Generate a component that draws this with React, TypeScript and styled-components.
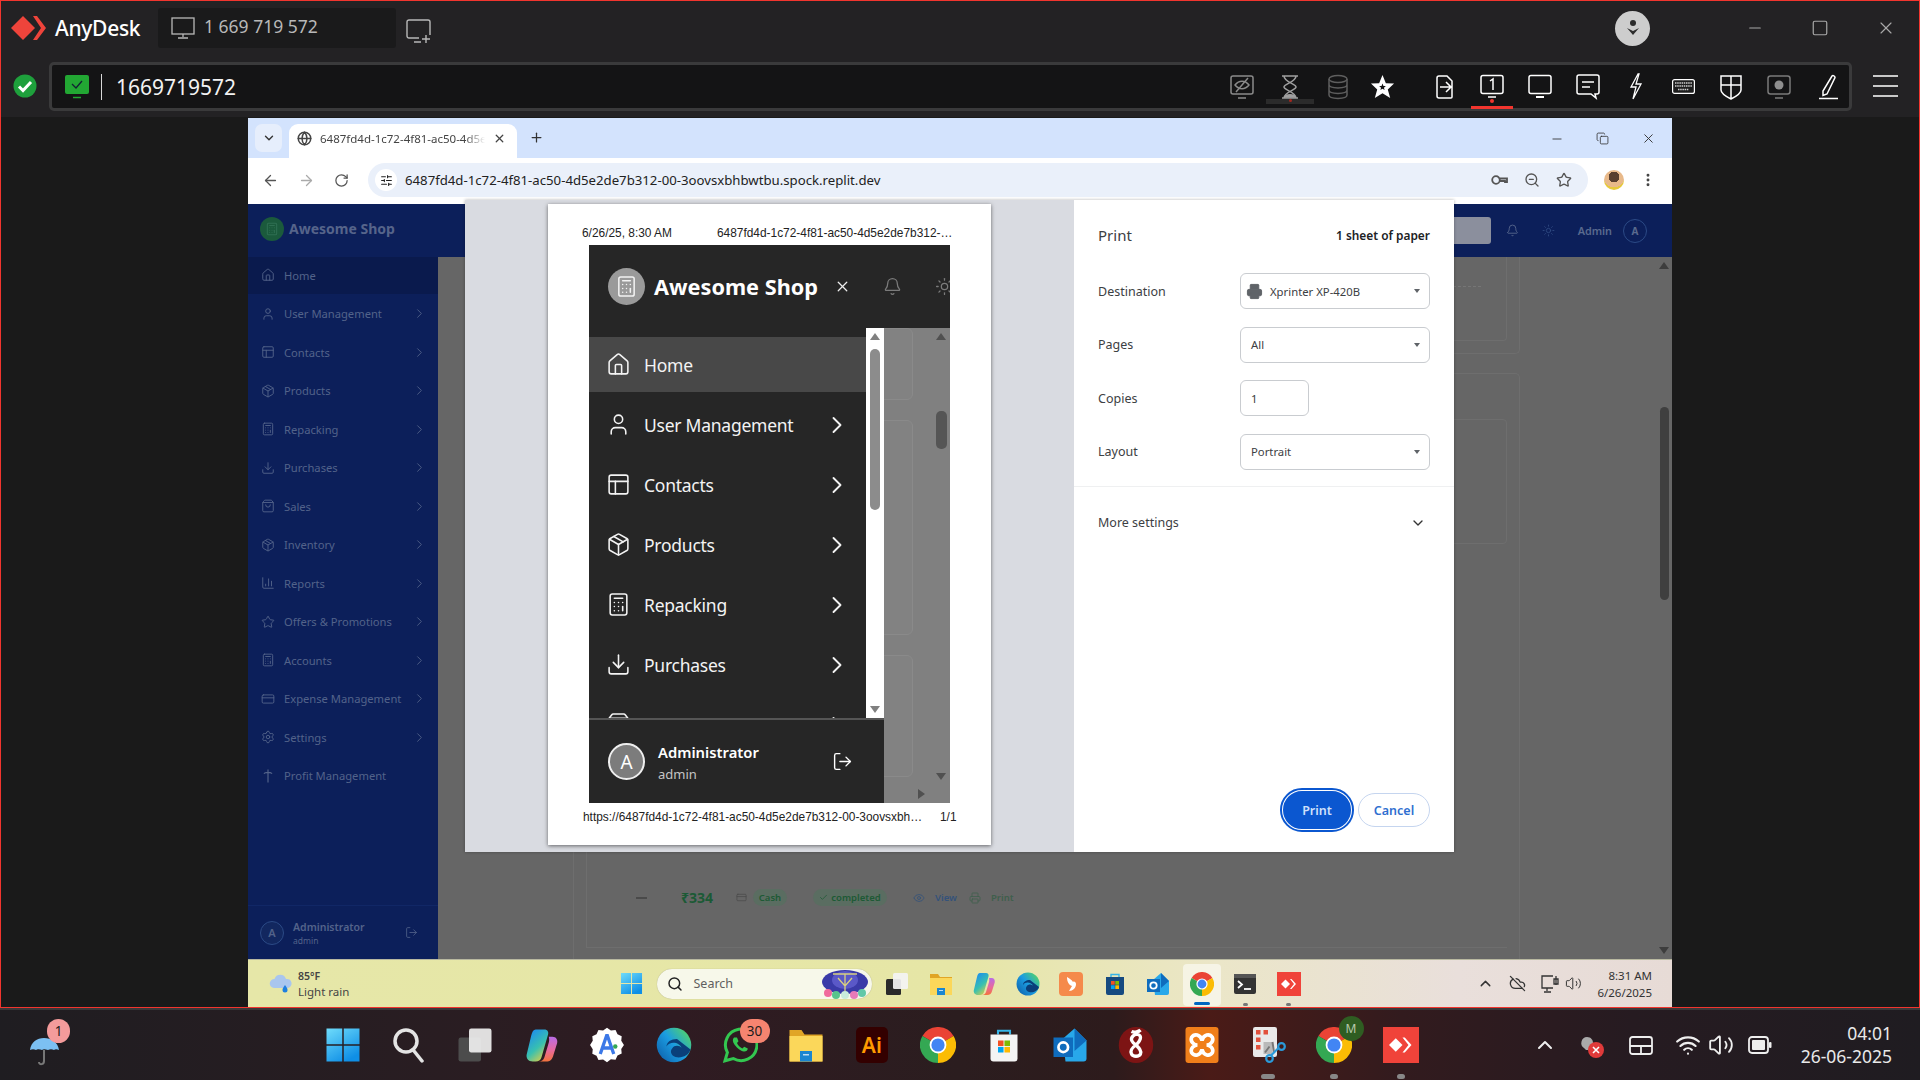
import React, { FC, ReactNode } from "react";
import styled, { createGlobalStyle } from "styled-components";
import {
  Home,
  User,
  PanelsTopLeft,
  Package,
  Calculator,
  Download,
  ChartColumn,
  Star,
  CreditCard,
  Settings,
  ChevronRight,
  ChevronDown,
  LogOut,
  Bell,
  Sun,
  X,
  Plus,
  Minus,
  ArrowLeft,
  ArrowRight,
  RotateCw,
  Globe,
  SlidersHorizontal,
  ZoomOut,
  MoreVertical,
  Printer,
  Search,
  ChevronUp,
  Copy,
  Square,
  Eye,
  Check,
  Volume2,
  CloudOff,
  Wifi,
  ShoppingBag,
} from "lucide-react";

const UI_FONT = `"Noto Sans", "Open Sans", sans-serif`;

const GlobalStyle = createGlobalStyle`
  html, body {
    margin: 0;
    padding: 0;
    background: #1a1a1a;
  }
  * {
    box-sizing: border-box;
  }
  svg {
    display: block;
    flex-shrink: 0;
  }
`;

const Screen = styled.div`
  width: 1920px;
  height: 1080px;
  display: flex;
  flex-direction: column;
  overflow: hidden;
  font-family: ${UI_FONT};
`;

/* ---------- AnyDesk frame ---------- */

const Frame = styled.div`
  height: 1008px;
  display: flex;
  flex-direction: column;
  border: 1px solid #f2352e;
  background: #1a1a1a;
`;

const TitleBar = styled.div`
  height: 59px;
  flex-shrink: 0;
  background: #232224;
  display: flex;
  align-items: center;
  padding: 0 0 5px 9px;
`;

const Brand = styled.div`
  width: 148px;
  display: flex;
  align-items: center;
  gap: 9px;
  color: #fff;
  font-size: 21px;
  font-weight: 500;
  letter-spacing: -0.3px;
`;

const SessionTab = styled.div`
  width: 238px;
  height: 40px;
  background: #1a1a1b;
  border-radius: 3px;
  display: flex;
  align-items: center;
  gap: 9px;
  padding-left: 13px;
  color: #b8b8b8;
  font-size: 17.5px;
`;

const SessionId = styled.span`
  margin-top: -4px;
`;

const NewSession = styled.div`
  margin-left: 10px;
  margin-top: 7px;
`;

const TitleRight = styled.div`
  margin-left: auto;
  display: flex;
  align-items: center;
`;

const AccountDot = styled.div`
  width: 35px;
  height: 35px;
  border-radius: 50%;
  background: #cdcdcd;
  display: flex;
  align-items: center;
  justify-content: center;
  margin-right: 96px;
`;

const WinButtons = styled.div`
  display: flex;
  align-items: center;
  gap: 47px;
  padding-right: 23px;
  color: #a8a8a8;
`;

const ToolbarRow = styled.div`
  height: 57px;
  flex-shrink: 0;
  background: #232224;
  display: flex;
  align-items: flex-start;
  padding-left: 12px;
`;

const Status = styled.div`
  width: 36px;
  height: 48px;
  margin-top: 2px;
  display: flex;
  align-items: center;
`;

const AddressBox = styled.div`
  width: 1803px;
  height: 49px;
  margin-top: 2px;
  background: #141415;
  border: 3px solid #3a3a3b;
  border-radius: 5px;
  display: flex;
  align-items: center;
  padding-left: 13px;
  position: relative;
`;

const AddressText = styled.div`
  margin-left: 12px;
  padding-left: 14px;
  border-left: 1px solid #d8d8d8;
  line-height: 26px;
  color: #f2f2f2;
  font-size: 21px;
`;

const ToolIcons = styled.div`
  margin-left: auto;
  display: flex;
  align-items: center;
  height: 100%;
  padding-right: 1px;
`;

const ToolSlot = styled.div<{ $after: number }>`
  width: 40px;
  height: 100%;
  margin-right: ${(p) => p.$after}px;
  display: flex;
  align-items: center;
  justify-content: center;
  position: relative;
`;

const ActiveMark = styled.div`
  position: absolute;
  left: 50%;
  bottom: -1px;
  width: 42px;
  height: 3px;
  margin-left: -21px;
  background: #f2352e;
  &::before {
    content: "";
    position: absolute;
    left: 19px;
    top: -7px;
    width: 4px;
    height: 4px;
    border-radius: 50%;
    background: #f2352e;
  }
`;

const BusyMark = styled.div`
  position: absolute;
  left: -4px;
  right: -4px;
  bottom: 4px;
  height: 5px;
  background: #2b2b2b;
  &::before {
    content: "";
    position: absolute;
    left: 23px;
    top: 0;
    width: 3px;
    height: 3px;
    border-radius: 50%;
    background: #a3271f;
  }
`;

const Burger = styled.div`
  width: 25px;
  margin-left: 21px;
  margin-top: 15px;
  display: flex;
  flex-direction: column;
  gap: 8px;
  & > span {
    height: 2px;
    background: #c9c9c9;
  }
`;

const RemoteView = styled.div`
  flex: 1;
  min-height: 0;
  padding: 1px 247px 0 247px;
  display: flex;
`;

/* ---------- remote browser ---------- */

const Browser = styled.div`
  width: 1424px;
  display: flex;
  flex-direction: column;
`;

const TabStrip = styled.div`
  height: 40px;
  flex-shrink: 0;
  background: #d3e3fd;
  display: flex;
  align-items: flex-end;
  padding-left: 7px;
  color: #333;
`;

const TabSearch = styled.div`
  width: 27px;
  height: 28px;
  margin-bottom: 6px;
  border-radius: 7px;
  background: #e6eefc;
  display: flex;
  align-items: center;
  justify-content: center;
`;

const ActiveTab = styled.div`
  width: 228px;
  height: 34px;
  margin-left: 7px;
  padding: 0 0 5px 8px;
  background: #fff;
  border-radius: 9px 9px 0 0;
  display: flex;
  align-items: center;
  gap: 8px;
  font-size: 11.5px;
  color: #444;
`;

const TabTitle = styled.span`
  width: 165px;
  white-space: nowrap;
  overflow: hidden;
  mask-image: linear-gradient(90deg, #000 88%, transparent 100%);
`;

const NewTab = styled.div`
  margin-left: 12px;
  margin-bottom: 13px;
`;

const ChromeButtons = styled.div`
  margin-left: auto;
  margin-bottom: 12px;
  display: flex;
  align-items: center;
  gap: 32px;
  padding-right: 16px;
`;

const UrlBar = styled.div`
  height: 46px;
  flex-shrink: 0;
  background: #fff;
  display: flex;
  align-items: center;
  padding: 0 0 2px 14px;
  color: #555;
`;

const NavButtons = styled.div`
  display: flex;
  align-items: center;
  gap: 19px;
  width: 106px;
`;

const UrlPill = styled.div`
  width: 1220px;
  height: 34px;
  border-radius: 17px;
  background: #eaf0fa;
  display: flex;
  align-items: center;
  padding: 0 16px 0 7px;
  font-size: 13.2px;
  color: #222;
`;

const SiteBadge = styled.div`
  width: 22px;
  height: 22px;
  border-radius: 50%;
  background: #fff;
  margin-right: 8px;
  display: flex;
  align-items: center;
  justify-content: center;
`;

const PillIcons = styled.div`
  margin-left: auto;
  display: flex;
  align-items: center;
  gap: 16px;
  color: #555;
`;

const Profile = styled.div`
  width: 20px;
  height: 20px;
  margin-left: 16px;
  border-radius: 50%;
  background: radial-gradient(circle at 50% 35%, #5a4030 0 32%, #e8b98a 33% 62%, #e6c93c 63%);
`;

const Dots = styled.div`
  margin-left: 16px;
  color: #444;
`;

const Page = styled.div`
  flex: 1;
  min-height: 0;
  display: flex;
  position: relative;
  background: #666;
`;

/* ---------- dimmed shop page behind the dialog ---------- */

const SideBar = styled.div`
  width: 190px;
  flex-shrink: 0;
  background: #0c1f5a;
  display: flex;
  flex-direction: column;
  color: #53638a;
`;

const SideBrand = styled.div`
  height: 53px;
  display: flex;
  align-items: center;
  gap: 5px;
  padding: 0 0 4px 12px;
  font-size: 14px;
  font-weight: 700;
  color: #56648a;
`;

const LogoDot = styled.div`
  width: 24px;
  height: 24px;
  border-radius: 50%;
  background: #1b5a3c;
  display: flex;
  align-items: center;
  justify-content: center;
  color: #2f6f52;
`;

const SideNav = styled.div`
  display: flex;
  flex-direction: column;
  gap: 2px;
`;

const SideItem = styled.div<{ $active?: boolean }>`
  height: 36.5px;
  display: flex;
  align-items: center;
  padding-left: 13px;
  gap: 9px;
  font-size: 11.2px;
  background: ${(p) => (p.$active ? "#0a1a4d" : "transparent")};
  & > span {
    flex: 1;
    white-space: nowrap;
  }
`;

const SideChevron = styled.div`
  width: 26px;
`;

const SideUser = styled.div`
  margin-top: auto;
  height: 54px;
  border-top: 1px solid #112766;
  display: flex;
  align-items: center;
  padding-left: 12px;
`;

const SideAvatar = styled.div`
  width: 24px;
  height: 24px;
  border-radius: 50%;
  border: 1px solid #2b4a86;
  background: #12275f;
  display: flex;
  align-items: center;
  justify-content: center;
  font-size: 11px;
  font-weight: 600;
`;

const SideUserText = styled.div`
  margin: 2px 0 0 9px;
  width: 112px;
  font-size: 10.5px;
  font-weight: 600;
  line-height: 14px;
  & > small {
    display: block;
    font-size: 8.5px;
    font-weight: 400;
  }
`;

const Main = styled.div`
  flex: 1;
  min-width: 0;
  display: flex;
  flex-direction: column;
`;

const AppHeader = styled.div`
  height: 53px;
  flex-shrink: 0;
  background: #0c1f5a;
  display: flex;
  align-items: center;
  justify-content: flex-end;
  padding-right: 25px;
  color: #5a6a8e;
  font-size: 10.8px;
  font-weight: 600;
`;

const HeaderSearch = styled.div`
  width: 120px;
  height: 27px;
  border-radius: 3px;
  background: #8b8f9d;
  margin-right: 15px;
`;

const HeaderGap = styled.div<{ $w: number }>`
  width: ${(p) => p.$w}px;
`;

const HeaderAvatar = styled.div`
  width: 24px;
  height: 24px;
  margin-left: 11px;
  border-radius: 50%;
  border: 1px solid #2b4a86;
  display: flex;
  align-items: center;
  justify-content: center;
  font-size: 10px;
  font-weight: 700;
`;

const Content = styled.div`
  flex: 1;
  min-height: 0;
  display: flex;
  position: relative;
  padding-left: 135px;
`;

const CardColumn = styled.div`
  width: 947px;
  display: flex;
  flex-direction: column;
  gap: 19px;
`;

const OuterTop = styled.div`
  height: 97px;
  flex-shrink: 0;
  border: 1px solid #6e6e6e;
  border-top: 0;
  border-radius: 0 0 5px 5px;
  padding: 0 12px;
`;

const InnerTop = styled.div`
  height: 84px;
  padding-top: 29px;
  border: 1px solid #6e6e6e;
  border-top: 0;
  border-radius: 0 0 4px 4px;
  &::before {
    content: "";
    display: block;
    width: 894px;
    border-top: 1px dashed #767676;
  }
`;

const OuterBottom = styled.div`
  flex: 1;
  min-height: 0;
  border: 1px solid #6e6e6e;
  border-bottom: 0;
  border-radius: 5px 5px 0 0;
  padding: 45px 12px 11px;
  display: flex;
  flex-direction: column;
`;

const InnerBottom = styled.div`
  height: 125px;
  flex-shrink: 0;
  border: 1px solid #6e6e6e;
  border-radius: 4px;
`;

const TxRow = styled.div`
  margin-top: auto;
  height: 100px;
  border: 1px solid #6e6e6e;
  border-top: 0;
  border-right: 0;
  display: flex;
  align-items: center;
  padding: 0 0 0 49px;
  font-size: 9.5px;
  font-weight: 600;
  color: #50615a;
  & > * {
    flex-shrink: 0;
  }
`;

const TxDash = styled.div`
  width: 11px;
  height: 2px;
  margin-right: 34px;
  background: #4a4a4a;
`;

const TxAmount = styled.div`
  width: 55px;
  font-size: 14px;
  font-weight: 700;
  color: #1b5a35;
`;

const TxPill = styled.div<{ $w: number; $after: number }>`
  width: ${(p) => p.$w}px;
  height: 17px;
  margin-right: ${(p) => p.$after}px;
  border-radius: 9px;
  background: #5a6d61;
  color: #1d5a35;
  display: flex;
  align-items: center;
  justify-content: center;
  gap: 3px;
`;

const TxLink = styled.div<{ $color: string }>`
  width: 56px;
  display: flex;
  align-items: center;
  gap: 10px;
  color: ${(p) => p.$color};
`;

const PageScroll = styled.div`
  position: absolute;
  right: 0;
  top: 0;
  bottom: 0;
  width: 14px;
  color: #3d3d3d;
`;

const ScrollUp = styled.div`
  position: absolute;
  top: 5px;
  left: 1px;
  border: 5px solid transparent;
  border-top: 0;
  border-bottom: 7px solid #3d3d3d;
`;

const ScrollDown = styled.div`
  position: absolute;
  bottom: 5px;
  left: 1px;
  border: 5px solid transparent;
  border-bottom: 0;
  border-top: 7px solid #3d3d3d;
`;

const ScrollThumb = styled.div`
  position: absolute;
  top: 150px;
  left: 2px;
  width: 9px;
  height: 193px;
  border-radius: 5px;
  background: #3f3f3f;
`;

/* ---------- print dialog ---------- */

const PrintDialog = styled.div`
  position: absolute;
  left: 217px;
  top: -4px;
  width: 989px;
  height: 652px;
  display: flex;
  background: #fff;
  box-shadow: 0 0 3px rgba(0, 0, 0, 0.3);
`;

const PreviewPane = styled.div`
  width: 609px;
  flex-shrink: 0;
  background: #d9dbe1;
  padding: 4px 0 0 83px;
`;

const Sheet = styled.div`
  width: 443px;
  height: 641px;
  background: #fff;
  box-shadow: 0 1px 4px rgba(0, 0, 0, 0.55);
  display: flex;
  flex-direction: column;
  font-family: "Liberation Sans", Arial, sans-serif;
  font-size: 11.9px;
  color: #222;
`;

const SheetHead = styled.div`
  height: 41px;
  flex-shrink: 0;
  padding: 22px 0 0 34px;
  display: flex;
  white-space: nowrap;
  & > span:first-child {
    width: 135px;
  }
`;

const SheetFoot = styled.div`
  padding: 7px 0 0 35px;
  display: flex;
  white-space: nowrap;
  & > span:first-child {
    width: 357px;
  }
`;

const PrintBox = styled.div`
  width: 361px;
  height: 558px;
  margin-left: 41px;
  flex-shrink: 0;
  display: flex;
  flex-direction: column;
  background: #808080;
  font-family: ${UI_FONT};
  color: #fff;
  overflow: hidden;
`;

const BoxHeader = styled.div`
  height: 83px;
  flex-shrink: 0;
  background: #262626;
  display: flex;
  align-items: center;
  padding: 0 0 0 19px;
`;

const BoxLogo = styled.div`
  width: 37px;
  height: 37px;
  border-radius: 50%;
  background: #9a9a9a;
  display: flex;
  align-items: center;
  justify-content: center;
`;

const BoxTitle = styled.div`
  margin-left: 9px;
  width: 180px;
  font-size: 21.7px;
  font-weight: 700;
  white-space: nowrap;
`;

const BoxHeaderIcon = styled.div<{ $w: number; $c: string }>`
  width: ${(p) => p.$w}px;
  color: ${(p) => p.$c};
  flex-shrink: 0;
`;

const BoxBody = styled.div`
  flex: 1;
  min-height: 0;
  display: flex;
`;

const BoxLeft = styled.div`
  width: 295px;
  flex-shrink: 0;
  display: flex;
  flex-direction: column;
`;

const NavWrap = styled.div`
  height: 390px;
  flex-shrink: 0;
  display: flex;
  overflow: hidden;
`;

const BoxNav = styled.div`
  width: 277px;
  flex-shrink: 0;
  background: #262626;
  padding-top: 9px;
  display: flex;
  flex-direction: column;
  gap: 5px;
`;

const BoxItem = styled.div<{ $active?: boolean }>`
  height: 55px;
  flex-shrink: 0;
  display: flex;
  align-items: center;
  padding-left: 17px;
  font-size: 17.5px;
  letter-spacing: -0.25px;
  background: ${(p) => (p.$active ? "#484848" : "transparent")};
  color: #f3f3f3;
  & > span {
    margin-left: 13px;
    width: 179px;
    white-space: nowrap;
  }
`;

const NavScroll = styled.div`
  width: 18px;
  flex-shrink: 0;
  background: #fff;
  position: relative;
`;

const NavThumb = styled.div`
  position: absolute;
  left: 4px;
  top: 21px;
  width: 10px;
  height: 161px;
  border-radius: 5px;
  background: #8c8c8c;
`;

const NavArrow = styled.div<{ $down?: boolean }>`
  position: absolute;
  left: 4px;
  ${(p) => (p.$down ? "bottom: 5px;" : "top: 5px;")}
  border: 5px solid transparent;
  ${(p) =>
    p.$down
      ? "border-bottom: 0; border-top: 7px solid #808080;"
      : "border-top: 0; border-bottom: 7px solid #808080;"}
`;

const BoxUser = styled.div`
  flex: 1;
  background: #262626;
  border-top: 2px solid #555;
  display: flex;
  align-items: center;
  padding-left: 19px;
`;

const BoxAvatar = styled.div`
  width: 37px;
  height: 37px;
  border-radius: 50%;
  border: 2px solid #eee;
  background: #7c7c7c;
  display: flex;
  align-items: center;
  justify-content: center;
  font-size: 19px;
`;

const BoxUserText = styled.div`
  margin: 3px 0 0 13px;
  width: 174px;
  font-size: 14.8px;
  font-weight: 600;
  line-height: 21px;
  & > small {
    display: block;
    font-size: 13px;
    font-weight: 400;
    line-height: 22px;
    color: #c4c4c4;
  }
`;

const BoxRight = styled.div`
  flex: 1;
  position: relative;
  padding-bottom: 18px;
  display: flex;
  flex-direction: column;
  gap: 20px;
  overflow: hidden;
`;

const GhostCard = styled.div<{ $h: number }>`
  width: 37px;
  height: ${(p) => p.$h}px;
  flex-shrink: 0;
  margin-left: -8px;
  background: #828282;
  border: 1px solid #8a8a8a;
  border-radius: 6px;
`;

const BoxScrollThumb = styled.div`
  position: absolute;
  left: 52px;
  top: 83px;
  width: 11px;
  height: 38px;
  border-radius: 5px;
  background: #555;
`;

const BoxArrow = styled.div<{ $down?: boolean }>`
  position: absolute;
  left: 52px;
  ${(p) => (p.$down ? "bottom: 23px;" : "top: 5px;")}
  border: 5px solid transparent;
  ${(p) =>
    p.$down
      ? "border-bottom: 0; border-top: 7px solid #505050;"
      : "border-top: 0; border-bottom: 7px solid #505050;"}
`;

const BoxArrowRight = styled.div`
  position: absolute;
  left: 34px;
  bottom: 4px;
  border: 5px solid transparent;
  border-right: 0;
  border-left: 7px solid #505050;
`;

const SettingsPane = styled.div`
  flex: 1;
  display: flex;
  flex-direction: column;
  padding-top: 24px;
  color: #3c4043;
  font-size: 12.5px;
`;

const SettingsHead = styled.div`
  height: 22px;
  padding: 0 24px;
  display: flex;
  align-items: center;
  justify-content: space-between;
  font-size: 15px;
  margin-bottom: 27px;
  & > b {
    font-size: 11.9px;
    font-weight: 600;
    color: #202124;
  }
`;

const SettingRow = styled.div`
  height: 36px;
  margin-bottom: 17.5px;
  padding: 0 24px;
  display: grid;
  grid-template-columns: 142px 1fr;
  align-items: center;
`;

const SelectBox = styled.div<{ $narrow?: boolean }>`
  width: ${(p) => (p.$narrow ? "69px" : "190px")};
  height: 36px;
  border: 1px solid #c9ccd0;
  border-radius: 6px;
  display: flex;
  align-items: center;
  padding-left: 10px;
  font-size: 11.3px;
  color: #3c4043;
  position: relative;
  gap: 7px;
`;

const PrinterBadge = styled.div`
  margin-left: -5px;
  color: #5f6368;
`;

const Caret = styled.div`
  position: absolute;
  right: 9px;
  top: 15px;
  border: 3.5px solid transparent;
  border-bottom: 0;
  border-top: 4px solid #5f6368;
`;

const SettingsRule = styled.div`
  height: 1px;
  background: #eff0f1;
  margin-top: -1px;
`;

const MoreRow = styled.div`
  height: 71px;
  padding: 0 28px 0 24px;
  display: flex;
  align-items: center;
  justify-content: space-between;
`;

const ButtonRow = styled.div`
  margin-top: auto;
  padding: 0 24px 21px 0;
  display: flex;
  justify-content: flex-end;
  align-items: center;
  gap: 5px;
`;

const PrintBtn = styled.div`
  width: 72px;
  height: 42px;
  border-radius: 21px;
  background: #0b57d0;
  border: 2px solid #fff;
  outline: 2px solid #0b57d0;
  outline-offset: -1px;
  color: #cfe0fb;
  font-size: 12.5px;
  font-weight: 600;
  display: flex;
  align-items: center;
  justify-content: center;
`;

const CancelBtn = styled.div`
  width: 72px;
  height: 34px;
  border-radius: 17px;
  border: 1px solid #c5d5ef;
  color: #2f6fd0;
  font-size: 12.5px;
  font-weight: 600;
  display: flex;
  align-items: center;
  justify-content: center;
`;

/* ---------- remote taskbar ---------- */

const RemoteTaskbar = styled.div`
  height: 48px;
  flex-shrink: 0;
  border-top: 1px solid #b8b8a0;
  background: linear-gradient(90deg, #e6e7a8 0%, #e6e6a6 50%, #ebe6c8 68%, #e9dfdb 85%, #e7dbd6 100%);
  display: flex;
  align-items: center;
`;

const Weather = styled.div`
  width: 362px;
  flex-shrink: 0;
  padding-left: 21px;
  display: flex;
  align-items: center;
  gap: 5px;
  font-size: 11.5px;
  line-height: 15px;
  color: #444;
  & > div > b {
    display: block;
    font-weight: 600;
    font-size: 10.5px;
  }
`;

const TaskSlot = styled.div<{ $active?: boolean }>`
  width: 43.5px;
  height: 46px;
  flex-shrink: 0;
  display: flex;
  align-items: center;
  justify-content: center;
  position: relative;
  &::before {
    content: "";
    display: ${(p) => (p.$active ? "block" : "none")};
    position: absolute;
    left: 3px;
    right: 3px;
    top: 3px;
    bottom: 1px;
    border-radius: 4px;
    background: rgba(255, 255, 255, 0.55);
  }
  & > * {
    position: relative;
  }
`;

const RunDot = styled.div<{ $w?: number; $c?: string }>`
  position: absolute;
  left: 50%;
  bottom: ${(p) => (p.$c ? "2px" : "1px")};
  width: ${(p) => p.$w ?? 5}px;
  height: 3px;
  margin-left: ${(p) => -(p.$w ?? 5) / 2}px;
  border-radius: 2px;
  background: ${(p) => p.$c ?? "#777"};
`;

const SearchBox = styled.div`
  width: 215px;
  height: 30px;
  margin: 0 4px 0 3px;
  flex-shrink: 0;
  border-radius: 15px;
  background: #f7f8ea;
  display: flex;
  align-items: center;
  padding-left: 10px;
  gap: 11px;
  font-size: 12.5px;
  color: #5f5f5f;
  box-shadow: 0 0 1px rgba(0, 0, 0, 0.3);
`;

const SearchArt = styled.div`
  margin-left: auto;
  margin-right: 3px;
`;

const RemoteTray = styled.div`
  margin-left: auto;
  display: flex;
  align-items: center;
  padding-right: 20px;
  color: #333;
`;

const TrayGap = styled.div<{ $w: number }>`
  width: ${(p) => p.$w}px;
`;

const RemoteClock = styled.div`
  margin-left: 15px;
  text-align: right;
  font-size: 11.5px;
  line-height: 17px;
  color: #333;
`;

/* ---------- local taskbar ---------- */

const LocalTaskbar = styled.div`
  flex: 1;
  min-height: 0;
  border-top: 2px solid #3a3839;
  background: linear-gradient(90deg, #1f1d21 0%, #2a1d22 25%, #2f1b22 35%, #2b1d1f 50%, #2d1b1c 58%, #4a1b17 63%, #321b1e 73%, #261b21 85%, #1f1c21 100%);
  display: flex;
  align-items: center;
  padding-left: 28px;
  position: relative;
`;

const Umbrella = styled.div`
  width: 282px;
  flex-shrink: 0;
  position: relative;
  padding-top: 12px;
`;

const NotifyBadge = styled.div<{ $bg: string; $left: number; $top: number; $w: number }>`
  position: absolute;
  left: ${(p) => p.$left}px;
  top: ${(p) => p.$top}px;
  width: ${(p) => p.$w}px;
  height: 24px;
  border-radius: 12px;
  background: ${(p) => p.$bg};
  color: #1c1c1c;
  font-size: 13.5px;
  display: flex;
  align-items: center;
  justify-content: center;
`;

const LocalSlot = styled.div`
  width: 66.1px;
  height: 70px;
  flex-shrink: 0;
  display: flex;
  align-items: center;
  justify-content: center;
  position: relative;
`;

const LocalDot = styled.div<{ $wide?: boolean }>`
  position: absolute;
  bottom: 1px;
  left: 50%;
  width: ${(p) => (p.$wide ? "14px" : "8px")};
  height: 5px;
  margin-left: ${(p) => (p.$wide ? "-7px" : "-4px")};
  border-radius: 3px;
  background: #888;
`;

const ChromeBadge = styled.div`
  position: absolute;
  right: 4px;
  top: 6px;
  width: 25px;
  height: 25px;
  border-radius: 50%;
  background: #2f5d22;
  color: #b7c9ad;
  font-size: 12px;
  display: flex;
  align-items: center;
  justify-content: center;
`;

const LocalTray = styled.div`
  margin-left: auto;
  display: flex;
  align-items: center;
  padding-right: 28px;
  color: #eee;
`;

const LocalClock = styled.div`
  margin-left: 29px;
  text-align: right;
  font-size: 17.5px;
  line-height: 23px;
  color: #e9e9e9;
`;

const AiBadge = styled.div`
  width: 32px;
  height: 36px;
  border-radius: 5px;
  background: #330000;
  color: #ff9a00;
  font-size: 21px;
  font-weight: 600;
  display: flex;
  align-items: center;
  justify-content: center;
`;

/* ---------- drawn logos and toolbar glyphs ---------- */

const AnyDeskMark: FC<{ size?: number; color?: string }> = ({ size = 36, color = "#ef443b" }) => (
  <svg width={size} height={(size * 26) / 36} viewBox="0 0 36 26">
    <path d="M1 13 13 1l12 12-12 12z" fill={color} />
    <path d="M23 1h4l9 12-9 12h-4l8-12z" fill={color} />
  </svg>
);

const ChromeLogo: FC<{ size: number }> = ({ size }) => (
  <svg width={size} height={size} viewBox="0 0 24 24">
    <path d="M12 12 1.6 6a12 12 0 0 1 20.8 0z" fill="#ea4335" />
    <path d="M12 12 22.4 6A12 12 0 0 1 12 24z" fill="#fbbc04" />
    <path d="M12 12v12A12 12 0 0 1 1.6 6z" fill="#34a853" />
    <circle cx="12" cy="12" r="5.6" fill="#fff" />
    <circle cx="12" cy="12" r="4.4" fill="#4285f4" />
  </svg>
);

const WindowsLogo: FC<{ size: number }> = ({ size }) => (
  <svg width={size} height={size} viewBox="0 0 24 24">
    <defs>
      <linearGradient id="winGrad" x1="0" y1="0" x2="0.6" y2="1">
        <stop offset="0" stopColor="#6fdcfb" />
        <stop offset="1" stopColor="#0f8fe6" />
      </linearGradient>
    </defs>
    <path d="M1 1h10.500v10.500H1zM12.500 1H23v10.500H12.500zM1 12.500h10.500V23H1zM12.500 12.500H23V23H12.500z" fill="url(#winGrad)" />
  </svg>
);

const EdgeLogo: FC<{ size: number }> = ({ size }) => (
  <svg width={size} height={size} viewBox="0 0 24 24">
    <defs>
      <linearGradient id="edgeGrad" x1="1" y1="0.2" x2="0" y2="1">
        <stop offset="0" stopColor="#52d36a" />
        <stop offset="0.45" stopColor="#1b9de2" />
        <stop offset="1" stopColor="#0c59a4" />
      </linearGradient>
    </defs>
    <circle cx="12" cy="12" r="11.500" fill="url(#edgeGrad)" />
    <path d="M23 15c-1 4-6 6-10 5-3-1-4-4-2-6 1-2 5-2 6 0-1-4-8-5-10-1 0-3 3-5 7-5" fill="#0a3f7a" />
  </svg>
);

const CopilotLogo: FC<{ size: number }> = ({ size }) => (
  <svg width={size} height={size} viewBox="0 0 24 24">
    <defs>
      <linearGradient id="copA" x1="0.2" y1="0" x2="0.8" y2="1">
        <stop offset="0" stopColor="#1c8cf0" />
        <stop offset="0.55" stopColor="#38c0b0" />
        <stop offset="1" stopColor="#e8d040" />
      </linearGradient>
      <linearGradient id="copB" x1="0.5" y1="0" x2="0.5" y2="1">
        <stop offset="0" stopColor="#b86be6" />
        <stop offset="0.55" stopColor="#e86a9c" />
        <stop offset="1" stopColor="#f4733c" />
      </linearGradient>
    </defs>
    <path d="M8 1h6c2 0 3 1.500 2.500 3.500L12 20c-.6 2-2 3-4 3H6c-3 0-5-2.500-4-5.500L5 5c.6-2.500 1.500-4 3-4z" fill="url(#copA)" />
    <path d="M17 6h2.500c2.500 0 3.800 2 3.200 4.500l-2.500 8C19.500 21.500 18 23 15 23h-5c2 0 3.300-1 4-3l3-10c.4-1.500.3-3 0-4z" fill="url(#copB)" />
  </svg>
);

const FolderLogo: FC<{ size: number }> = ({ size }) => (
  <svg width={size} height={size} viewBox="0 0 24 24">
    <path d="M1 2h8l2 3h12v18H1z" fill="#e0a526" />
    <path d="M1 6h22v17H1z" fill="#fbd75a" />
    <path d="M8 16h8v7H8z" fill="#1a86d0" />
    <path d="M10 18h4v1h-4z" fill="#fff" opacity="0.7" />
  </svg>
);

const StoreLogo: FC<{ size: number; body: string }> = ({ size, body }) => (
  <svg width={size} height={size} viewBox="0 0 24 24">
    <path d="M8 5V2.500h8V5" fill="none" stroke="#35b4e8" strokeWidth="1.400" />
    <path d="M3 5h18v16a2 2 0 0 1-2 2H5a2 2 0 0 1-2-2z" fill={body} />
    <path d="M8 9h3.700v3.700H8z" fill="#f25022" />
    <path d="M12.300 9H16v3.700h-3.700z" fill="#7fba00" />
    <path d="M8 13.300h3.700V17H8z" fill="#00a4ef" />
    <path d="M12.300 13.300H16V17h-3.700z" fill="#ffb900" />
  </svg>
);

const OutlookLogo: FC<{ size: number }> = ({ size }) => (
  <svg width={size} height={size} viewBox="0 0 24 24">
    <path d="M7 8 15 1l8 8v12a2 2 0 0 1-2 2H9z" fill="#28a8ea" />
    <path d="M15 1l8 8-8 7z" fill="#0f6cbd" />
    <path d="M1 7h13v13H1z" fill="#0f6cbd" />
    <circle cx="7.500" cy="13.500" r="3.200" fill="none" stroke="#fff" strokeWidth="1.800" />
  </svg>
);

const TerminalLogo: FC<{ size: number }> = ({ size }) => (
  <svg width={size} height={size} viewBox="0 0 24 24">
    <rect x="1" y="2" width="22" height="20" rx="2" fill="#333" />
    <rect x="1" y="2" width="22" height="4" fill="#555" />
    <path d="m5 9 4 3.500L5 16" fill="none" stroke="#fff" strokeWidth="1.800" />
    <path d="M11 17h7" stroke="#fff" strokeWidth="1.800" />
  </svg>
);

const SquareAnyDesk: FC<{ size: number }> = ({ size }) => (
  <svg width={size} height={size} viewBox="0 0 24 24">
    <rect width="24" height="24" fill="#f0433a" />
    <path d="M4 12l4.500-4.500L13 12l-4.500 4.500z" fill="#fff" />
    <path d="M13 7h1.500l4.500 5-4.500 5H13l4-5z" fill="#fff" />
  </svg>
);

const WhatsAppLogo: FC<{ size: number }> = ({ size }) => (
  <svg width={size} height={size} viewBox="0 0 24 24">
    <path d="M2 22.500 3.600 17A10.500 10.500 0 1 1 7.500 21z" fill="none" stroke="#33c750" strokeWidth="2" />
    <path d="M8 7c-1.200 1-1 3 .5 5s4 4 6 4.300c1.500.2 2.600-.8 2.700-2l-2.400-1.200-1.200 1.200c-1.500-.5-3-2-3.600-3.600l1-1.200L10 7z" fill="#33c750" />
  </svg>
);

const SparkLogo: FC<{ size: number }> = ({ size }) => (
  <svg width={size} height={size} viewBox="0 0 24 24">
    <path d="M12 .5l2.600 1.800 3.100-.3 1.300 2.800 2.800 1.300-.3 3.100 1.800 2.800-1.800 2.600.3 3.100-2.800 1.300-1.300 2.800-3.100-.3L12 23.500l-2.600-1.800-3.100.3L5 19.200l-2.800-1.300.3-3.100L.7 12l1.800-2.800-.3-3.100L5 4.800l1.300-2.800 3.100.3z" fill="#fff" />
    <path d="M12 5 7.500 18M12 5l4.500 13M9 14h6" fill="none" stroke="#3b78e7" strokeWidth="2.200" />
    <circle cx="17.500" cy="13" r="1.500" fill="#34a853" />
  </svg>
);

const RedEightLogo: FC<{ size: number }> = ({ size }) => (
  <svg width={size} height={size} viewBox="0 0 24 24">
    <ellipse cx="12" cy="12" rx="11.500" ry="12" fill="#7d1414" />
    <path d="M9 3c2 1 5 0 6-1M12 12c-3-2-4-4-2-6s5-1 5 1-1 3-3 5c-3 2-4 4-3 6s5 2 6 0-1-4-3-6" fill="none" stroke="#fff" strokeWidth="2.200" />
  </svg>
);

const XamppLogo: FC<{ size: number }> = ({ size }) => (
  <svg width={size} height={size} viewBox="0 0 24 24">
    <rect x="1" width="22" height="24" rx="2" fill="#f07f1a" />
    <path d="M5 7c2-3 6-2 7 2 1-4 5-5 7-2 1 3-2 5-4 5 2 0 5 2 4 5-2 3-6 2-7-2-1 4-5 5-7 2-1-3 2-5 4-5-2 0-5-2-4-5z" fill="none" stroke="#fff" strokeWidth="2.400" />
  </svg>
);

const SnipLogo: FC<{ size: number }> = ({ size }) => (
  <svg width={size} height={size} viewBox="0 0 24 24">
    <rect x="2" y="0" width="16" height="20" rx="1.500" fill="#e9e9e9" />
    <path d="M4 2h3v3H4zM9 2h3v3H9zM4 7h3v3H4zM4 12h3v3H4z" fill="#e2503c" />
    <path d="M9 10h6v8H9z" fill="#b9b9b9" />
    <path d="M13 13l-3 4M15 10l1 7" stroke="#777" strokeWidth="1.300" />
    <circle cx="21" cy="13" r="2.200" fill="none" stroke="#2a9ad9" strokeWidth="1.500" />
    <circle cx="13" cy="21" r="2.200" fill="none" stroke="#2a9ad9" strokeWidth="1.500" />
    <path d="M19 14l-5 5" stroke="#2a9ad9" strokeWidth="1.400" />
  </svg>
);

const TaskViewLogo: FC<{ size: number; back: string; front: string }> = ({ size, back, front }) => (
  <svg width={size} height={size} viewBox="0 0 24 24">
    <rect x="1" y="7" width="15" height="16" rx="1.500" fill={back} />
    <rect x="8" y="1" width="15" height="16" rx="1.500" fill={front} opacity="0.92" />
  </svg>
);

const UmbrellaIcon: FC = () => (
  <svg width="34" height="30" viewBox="0 0 34 30">
    <path d="M2 14C3 6 9 2 16 2s14 4 15 12c-2-1-4-1-5 0-2-1-4-1-6 0-3-1-5-1-6 0-2-1-5-1-6 0-2-1-4-1-6 0z" fill="#7cc0f2" />
    <path d="M16 14v11c0 4-5 4-5 1" fill="none" stroke="#777" strokeWidth="2" />
  </svg>
);

const CloudRain: FC = () => (
  <svg width="24" height="24" viewBox="0 0 24 24">
    <path d="M5 16a4.500 4.500 0 0 1 .5-9 6 6 0 0 1 11.500 0A4.500 4.500 0 0 1 19 16z" fill="#a9c6ee" />
    <path d="M16 13c1.500 2 2.500 3.500 2.500 5a2.500 2.500 0 0 1-5 0c0-1.500 1-3 2.500-5z" fill="#1d7fe0" />
  </svg>
);

const BingArt: FC = () => (
  <svg width="48" height="30" viewBox="0 0 48 30">
    <ellipse cx="24" cy="13" rx="23" ry="12" fill="#3a3aa8" />
    <ellipse cx="24" cy="11" rx="13" ry="9" fill="#5a58c8" />
    <path d="M12 5h24M24 5v17M17 9l7 8 7-8" stroke="#d8d080" strokeWidth="1.300" fill="none" />
    <circle cx="7" cy="24" r="4" fill="#f06a9c" />
    <circle cx="15" cy="26" r="4" fill="#58c48c" />
    <circle cx="24" cy="26" r="4" fill="#c9ecdc" />
    <circle cx="33" cy="26" r="4" fill="#e87ab8" />
    <circle cx="41" cy="24" r="4" fill="#62c8a8" />
  </svg>
);

const ProfitGlyph: FC = () => (
  <svg width="14" height="14" viewBox="0 0 24 24" fill="none" stroke="currentColor" strokeWidth="2">
    <path d="M12 1v22M5 8c2-3 11-3 14 0" />
  </svg>
);

const KeyGlyph: FC = () => (
  <svg width="17" height="14" viewBox="0 0 17 14" fill="none" stroke="currentColor" strokeWidth="1.800">
    <circle cx="5" cy="7" r="3.800" />
    <path d="M9 5.500h7v3.500h-2V8H9" />
  </svg>
);

const BatteryGlyph: FC = () => (
  <svg width="24" height="18" viewBox="0 0 24 18">
    <rect x="1" y="1" width="19" height="16" rx="3" fill="none" stroke="#eee" strokeWidth="1.800" />
    <rect x="4" y="4" width="13" height="10" rx="1" fill="#eee" />
    <rect x="21" y="6" width="2.500" height="6" rx="1" fill="#eee" />
  </svg>
);

const G: FC<{ size?: number; c?: string; children: ReactNode; sw?: number }> = ({ size = 26, c = "#fff", sw = 1.5, children }) => (
  <svg width={size} height={size} viewBox="0 0 26 26" fill="none" stroke={c} strokeWidth={sw}>
    {children}
  </svg>
);

const toolbarIcons: { after: number; node: ReactNode; active?: boolean; busy?: boolean }[] = [
  {
    after: 8,
    node: (
      <G c="#8a8a8a">
        <rect x="2" y="2" width="22" height="18" rx="2" />
        <path d="M9 24h8M6 11c4-5 10-5 14 0-4 5-10 5-14 0zM7 18 19 4" />
      </G>
    ),
  },
  {
    after: 8,
    busy: true,
    node: (
      <G c="#a0a0a0">
        <path d="M5 2h16M5 24h16M7 2c0 6 12 8 12 11s-12 5-12 11M19 2c0 6-12 8-12 11s12 5 12 11" />
        <path d="M8 23c1-3 9-3 10 0z" fill="#a0a0a0" />
      </G>
    ),
  },
  {
    after: 4,
    node: (
      <G c="#5e5e5e">
        <ellipse cx="13" cy="5" rx="9" ry="3.500" />
        <path d="M4 5v16c0 4.500 18 4.500 18 0V5M4 10.500c0 4.500 18 4.500 18 0M4 16c0 4.500 18 4.500 18 0" />
      </G>
    ),
  },
  {
    after: 23,
    node: (
      <svg width="25" height="25" viewBox="0 0 26 26">
        <path d="M13 1l3.500 8.500L25 10l-6.500 6L21 25l-8-5-8 5 2.500-9L1 10l8.500-.5z" fill="#fff" />
        <path d="M13 10l1 2.500 2.500.1-2 1.600.7 2.500-2.200-1.400-2.200 1.400.7-2.500-2-1.600 2.500-.1z" fill="#141415" />
      </svg>
    ),
  },
  {
    after: 7,
    node: (
      <G>
        <path d="M5 4a2 2 0 0 1 2-2h8l5 5v16a1 1 0 0 1-1 1H7a2 2 0 0 1-2-2zM8 13h10M14 8l5 5-5 5" />
      </G>
    ),
  },
  {
    after: 8,
    active: true,
    node: (
      <G>
        <rect x="2" y="1.500" width="22" height="18" rx="2" />
        <path d="M9 23h8M11 7l3-2v11" />
      </G>
    ),
  },
  {
    after: 8,
    node: (
      <G>
        <rect x="2" y="1.500" width="22" height="18" rx="2" />
        <path d="M9 23h8" strokeWidth="2" />
      </G>
    ),
  },
  {
    after: 8,
    node: (
      <G>
        <path d="M2 3a2 2 0 0 1 2-2h18a2 2 0 0 1 2 2v15a2 2 0 0 1-2 2h-2l1 4-5-4H4a2 2 0 0 1-2-2zM7 8h12M7 13h8" />
      </G>
    ),
  },
  {
    after: 7,
    node: (
      <svg width="14" height="27" viewBox="0 0 14 27">
        <path d="M9 1 2 14h5L4 26l8-15H7l3-10z" fill="none" stroke="#fff" strokeWidth="1.300" />
      </svg>
    ),
  },
  {
    after: 8,
    node: (
      <svg width="23" height="15" viewBox="0 0 23 15">
        <rect x=".6" y=".6" width="21.800" height="13.800" rx="2" fill="#1d1d1d" stroke="#fff" strokeWidth="1.200" />
        <path d="M3 4h17M3 7h17M6 10.500h11" stroke="#cfcfcf" strokeWidth="1.500" strokeDasharray="1.500 .7" />
      </svg>
    ),
  },
  {
    after: 8,
    node: (
      <G>
        <path d="M3 2h20v14c0 4-6 7-10 9-4-2-10-5-10-9zM13 2v23M3 11h20" />
      </G>
    ),
  },
  {
    after: 9,
    node: (
      <G c="#7a7a7a">
        <rect x="2" y="2" width="22" height="18" rx="2.500" />
        <path d="M9 24h8" />
        <circle cx="13" cy="11" r="4.500" fill="#8f8f8f" stroke="none" />
      </G>
    ),
  },
  {
    after: 0,
    node: (
      <G>
        <path d="M17 2c1-1 3 0 3 1.500L12 20l-4 1.500L8 17zM4 24.500h19" />
      </G>
    ),
  },
];

type NavDef = { label: string; icon: ReactNode; noChevron?: boolean };

const iconProps = { size: 14, strokeWidth: 1.6 };

const sideNav: NavDef[] = [
  { label: "Home", icon: <Home {...iconProps} />, noChevron: true },
  { label: "User Management", icon: <User {...iconProps} /> },
  { label: "Contacts", icon: <PanelsTopLeft {...iconProps} /> },
  { label: "Products", icon: <Package {...iconProps} /> },
  { label: "Repacking", icon: <Calculator {...iconProps} /> },
  { label: "Purchases", icon: <Download {...iconProps} /> },
  { label: "Sales", icon: <ShoppingBag {...iconProps} /> },
  { label: "Inventory", icon: <Package {...iconProps} /> },
  { label: "Reports", icon: <ChartColumn {...iconProps} /> },
  { label: "Offers & Promotions", icon: <Star {...iconProps} /> },
  { label: "Accounts", icon: <Calculator {...iconProps} /> },
  { label: "Expense Management", icon: <CreditCard {...iconProps} /> },
  { label: "Settings", icon: <Settings {...iconProps} /> },
  { label: "Profit Management", icon: <ProfitGlyph />, noChevron: true },
];

const bigIcon = { size: 25, strokeWidth: 1.5 };

const previewNav: NavDef[] = [
  { label: "Home", icon: <Home {...bigIcon} />, noChevron: true },
  { label: "User Management", icon: <User {...bigIcon} /> },
  { label: "Contacts", icon: <PanelsTopLeft {...bigIcon} /> },
  { label: "Products", icon: <Package {...bigIcon} /> },
  { label: "Repacking", icon: <Calculator {...bigIcon} /> },
  { label: "Purchases", icon: <Download {...bigIcon} /> },
  { label: "Sales", icon: <ShoppingBag {...bigIcon} /> },
];

const App: FC = () => {
  return (
    <Screen>
      <GlobalStyle />
      <Frame>
        <TitleBar>
          <Brand>
            <AnyDeskMark />
            AnyDesk
          </Brand>
          <SessionTab>
            <svg width="24" height="24" viewBox="0 0 24 24" fill="none" stroke="#b8b8b8" strokeWidth="1.300">
              <rect x="1" y="2" width="22" height="16" />
              <path d="M12 18v3M7 22h10" />
            </svg>
            <SessionId>1 669 719 572</SessionId>
          </SessionTab>
          <NewSession>
            <svg width="25" height="25" viewBox="0 0 25 25" fill="none" stroke="#b8b8b8" strokeWidth="1.400">
              <path d="M13 19H3a2 2 0 0 1-2-2V3a2 2 0 0 1 2-2h19a2 2 0 0 1 2 2v13" />
              <path d="M8 23h7M20 16v8M16 20h8" />
            </svg>
          </NewSession>
          <TitleRight>
            <AccountDot>
              <svg width="14" height="18" viewBox="0 0 14 18">
                <circle cx="7" cy="4" r="3" fill="#2c2c2c" />
                <path d="M1 9l6 7 6-7-6 3z" fill="#2c2c2c" />
              </svg>
            </AccountDot>
            <WinButtons>
              <Minus size={18} strokeWidth={1.6} />
              <Square size={18} strokeWidth={1.6} />
              <X size={20} strokeWidth={1.4} />
            </WinButtons>
          </TitleRight>
        </TitleBar>
        <ToolbarRow>
          <Status>
            <svg width="24" height="24" viewBox="0 0 24 24">
              <circle cx="12" cy="12" r="11.500" fill="#1ea03c" />
              <path d="m6 12.500 4 4 8-8.500" fill="none" stroke="#fff" strokeWidth="3" />
            </svg>
          </Status>
          <AddressBox>
            <svg width="24" height="24" viewBox="0 0 24 24">
              <rect width="24" height="19" rx="2" fill="#22a733" />
              <path d="m7 9 4 4 6-7" fill="none" stroke="#123" strokeWidth="1.300" />
              <path d="M8 22.500h8" stroke="#22a733" strokeWidth="1.500" />
            </svg>
            <AddressText>1669719572</AddressText>
            <ToolIcons>
              {toolbarIcons.map((tool, i) => (
                <ToolSlot key={i} $after={tool.after}>
                  {tool.node}
                  {tool.active && <ActiveMark />}
                  {tool.busy && <BusyMark />}
                </ToolSlot>
              ))}
            </ToolIcons>
          </AddressBox>
          <Burger>
            <span />
            <span />
            <span />
          </Burger>
        </ToolbarRow>
        <RemoteView>
          <Browser>
            <TabStrip>
              <TabSearch>
                <ChevronDown size={14} strokeWidth={2.4} />
              </TabSearch>
              <ActiveTab>
                <Globe size={15} strokeWidth={2.4} />
                <TabTitle>6487fd4d-1c72-4f81-ac50-4d5e</TabTitle>
                <X size={13} strokeWidth={2.4} />
              </ActiveTab>
              <NewTab>
                <Plus size={15} strokeWidth={2} />
              </NewTab>
              <ChromeButtons>
                <Minus size={14} strokeWidth={1.5} />
                <Copy size={13} strokeWidth={1.5} />
                <X size={15} strokeWidth={1.5} />
              </ChromeButtons>
            </TabStrip>
            <UrlBar>
              <NavButtons>
                <ArrowLeft size={17} strokeWidth={1.8} />
                <ArrowRight size={17} strokeWidth={1.8} color="#aaa" />
                <RotateCw size={15} strokeWidth={2} />
              </NavButtons>
              <UrlPill>
                <SiteBadge>
                  <SlidersHorizontal size={13} strokeWidth={2} />
                </SiteBadge>
                6487fd4d-1c72-4f81-ac50-4d5e2de7b312-00-3oovsxbhbwtbu.spock.replit.dev
                <PillIcons>
                  <KeyGlyph />
                  <ZoomOut size={16} strokeWidth={2} />
                  <Star size={16} strokeWidth={2} />
                </PillIcons>
              </UrlPill>
              <Profile />
              <Dots>
                <MoreVertical size={16} strokeWidth={2.4} />
              </Dots>
            </UrlBar>
            <Page>
              <SideBar>
                <SideBrand>
                  <LogoDot>
                    <Calculator size={14} strokeWidth={1.8} />
                  </LogoDot>
                  Awesome Shop
                </SideBrand>
                <SideNav>
                  {sideNav.map((item, i) => (
                    <SideItem key={item.label} $active={i === 0}>
                      {item.icon}
                      <span>{item.label}</span>
                      {!item.noChevron && (
                        <SideChevron>
                          <ChevronRight size={15} strokeWidth={1.4} />
                        </SideChevron>
                      )}
                    </SideItem>
                  ))}
                </SideNav>
                <SideUser>
                  <SideAvatar>A</SideAvatar>
                  <SideUserText>
                    Administrator
                    <small>admin</small>
                  </SideUserText>
                  <LogOut size={13} strokeWidth={1.5} />
                </SideUser>
              </SideBar>
              <Main>
                <AppHeader>
                  <HeaderSearch />
                  <Bell size={13} strokeWidth={1.6} />
                  <HeaderGap $w={23} />
                  <Sun size={13} strokeWidth={1.6} color="#2f4a83" />
                  <HeaderGap $w={23} />
                  Admin
                  <HeaderAvatar>A</HeaderAvatar>
                </AppHeader>
                <Content>
                  <CardColumn>
                    <OuterTop>
                      <InnerTop />
                    </OuterTop>
                    <OuterBottom>
                      <InnerBottom />
                      <TxRow>
                        <TxDash />
                        <TxAmount>₹334</TxAmount>
                        <CreditCard size={11} strokeWidth={1.6} color="#4a4a4a" />
                        <HeaderGap $w={6} />
                        <TxPill $w={34} $after={26}>
                          Cash
                        </TxPill>
                        <TxPill $w={74} $after={26}>
                          <Check size={9} strokeWidth={2} />
                          completed
                        </TxPill>
                        <TxLink $color="#34527a">
                          <Eye size={12} strokeWidth={1.6} />
                          View
                        </TxLink>
                        <TxLink $color="#3f5f4c">
                          <Printer size={12} strokeWidth={1.6} />
                          Print
                        </TxLink>
                      </TxRow>
                    </OuterBottom>
                  </CardColumn>
                  <PageScroll>
                    <ScrollUp />
                    <ScrollThumb />
                    <ScrollDown />
                  </PageScroll>
                </Content>
              </Main>

              <PrintDialog>
                <PreviewPane>
                  <Sheet>
                    <SheetHead>
                      <span>6/26/25, 8:30 AM</span>
                      <span>6487fd4d-1c72-4f81-ac50-4d5e2de7b312-…</span>
                    </SheetHead>
                    <PrintBox>
                      <BoxHeader>
                        <BoxLogo>
                          <Calculator size={23} strokeWidth={1.6} color="#f2f2f2" />
                        </BoxLogo>
                        <BoxTitle>Awesome Shop</BoxTitle>
                        <BoxHeaderIcon $w={49} $c="#eee">
                          <X size={17} strokeWidth={1.8} />
                        </BoxHeaderIcon>
                        <BoxHeaderIcon $w={52} $c="#7b7b7b">
                          <Bell size={19} strokeWidth={1.6} />
                        </BoxHeaderIcon>
                        <BoxHeaderIcon $w={14} $c="#7b7b7b">
                          <Sun size={19} strokeWidth={1.6} />
                        </BoxHeaderIcon>
                      </BoxHeader>
                      <BoxBody>
                        <BoxLeft>
                          <NavWrap>
                            <BoxNav>
                              {previewNav.map((item, i) => (
                                <BoxItem key={item.label} $active={i === 0}>
                                  {item.icon}
                                  <span>{item.label}</span>
                                  {!item.noChevron && <ChevronRight size={28} strokeWidth={1.6} />}
                                </BoxItem>
                              ))}
                            </BoxNav>
                            <NavScroll>
                              <NavArrow />
                              <NavThumb />
                              <NavArrow $down />
                            </NavScroll>
                          </NavWrap>
                          <BoxUser>
                            <BoxAvatar>A</BoxAvatar>
                            <BoxUserText>
                              Administrator
                              <small>admin</small>
                            </BoxUserText>
                            <LogOut size={21} strokeWidth={1.6} />
                          </BoxUser>
                        </BoxLeft>
                        <BoxRight>
                          <GhostCard $h={72} />
                          <GhostCard $h={215} />
                          <GhostCard $h={122} />
                          <BoxArrow />
                          <BoxScrollThumb />
                          <BoxArrow $down />
                          <BoxArrowRight />
                        </BoxRight>
                      </BoxBody>
                    </PrintBox>
                    <SheetFoot>
                      <span>https://6487fd4d-1c72-4f81-ac50-4d5e2de7b312-00-3oovsxbh…</span>
                      <span>1/1</span>
                    </SheetFoot>
                  </Sheet>
                </PreviewPane>
                <SettingsPane>
                  <SettingsHead>
                    Print
                    <b>1 sheet of paper</b>
                  </SettingsHead>
                  <SettingRow>
                    Destination
                    <SelectBox>
                      <PrinterBadge>
                        <Printer size={17} fill="#5f6368" strokeWidth={1.4} />
                      </PrinterBadge>
                      Xprinter XP-420B
                      <Caret />
                    </SelectBox>
                  </SettingRow>
                  <SettingRow>
                    Pages
                    <SelectBox>
                      All
                      <Caret />
                    </SelectBox>
                  </SettingRow>
                  <SettingRow>
                    Copies
                    <SelectBox $narrow>1</SelectBox>
                  </SettingRow>
                  <SettingRow>
                    Layout
                    <SelectBox>
                      Portrait
                      <Caret />
                    </SelectBox>
                  </SettingRow>
                  <SettingsRule />
                  <MoreRow>
                    More settings
                    <ChevronDown size={16} strokeWidth={2} color="#333" />
                  </MoreRow>
                  <ButtonRow>
                    <PrintBtn>Print</PrintBtn>
                    <CancelBtn>Cancel</CancelBtn>
                  </ButtonRow>
                </SettingsPane>
              </PrintDialog>
            </Page>
            <RemoteTaskbar>
              <Weather>
                <CloudRain />
                <div>
                  <b>85°F</b>
                  Light rain
                </div>
              </Weather>
              <TaskSlot>
                <WindowsLogo size={23} />
              </TaskSlot>
              <SearchBox>
                <Search size={16} strokeWidth={2.2} color="#222" />
                Search
                <SearchArt>
                  <BingArt />
                </SearchArt>
              </SearchBox>
              <TaskSlot>
                <TaskViewLogo size={24} back="#2a2a2a" front="#f4f4f4" />
              </TaskSlot>
              <TaskSlot>
                <FolderLogo size={24} />
              </TaskSlot>
              <TaskSlot>
                <CopilotLogo size={24} />
              </TaskSlot>
              <TaskSlot>
                <EdgeLogo size={24} />
              </TaskSlot>
              <TaskSlot>
                <svg width="24" height="24" viewBox="0 0 24 24">
                  <rect width="24" height="24" rx="4" fill="#f58a4b" />
                  <path d="M8 5c0 5 2 8 5 9l-3 5c4 0 7-3 7-7 0-2-2-3-3-2-1-2-4-4-6-5z" fill="#fff" />
                </svg>
              </TaskSlot>
              <TaskSlot>
                <StoreLogo size={24} body="#164a80" />
              </TaskSlot>
              <TaskSlot>
                <OutlookLogo size={24} />
              </TaskSlot>
              <TaskSlot $active>
                <ChromeLogo size={24} />
                <RunDot $w={16} $c="#0067c0" />
              </TaskSlot>
              <TaskSlot>
                <TerminalLogo size={24} />
                <RunDot />
              </TaskSlot>
              <TaskSlot>
                <SquareAnyDesk size={24} />
                <RunDot />
              </TaskSlot>
              <RemoteTray>
                <ChevronUp size={17} strokeWidth={2} />
                <TrayGap $w={15} />
                <CloudOff size={17} strokeWidth={1.8} />
                <TrayGap $w={15} />
                <svg width="18" height="20" viewBox="0 0 18 20" fill="none" stroke="#333" strokeWidth="1.300">
                  <path d="M12 14H1V2h11M6 14v3M3 18h7M15 2v9M13 5h4v5h-4z" />
                </svg>
                <TrayGap $w={6} />
                <Volume2 size={17} strokeWidth={1.4} />
                <RemoteClock>
                  8:31 AM
                  <br />
                  6/26/2025
                </RemoteClock>
              </RemoteTray>
            </RemoteTaskbar>
          </Browser>
        </RemoteView>
      </Frame>
      <LocalTaskbar>
        <Umbrella>
          <UmbrellaIcon />
          <NotifyBadge $bg="#f49b9b" $left={19} $top={-5} $w={23}>
            1
          </NotifyBadge>
        </Umbrella>
        <LocalSlot>
          <WindowsLogo size={36} />
        </LocalSlot>
        <LocalSlot>
          <svg width="36" height="36" viewBox="0 0 36 36" fill="none" stroke="#e4e4e4" strokeWidth="3.500">
            <circle cx="15" cy="14" r="11" />
            <path d="m23 24 8 10" strokeLinecap="round" />
          </svg>
        </LocalSlot>
        <LocalSlot>
          <TaskViewLogo size={36} back="#4c4c4c" front="#efefef" />
        </LocalSlot>
        <LocalSlot>
          <CopilotLogo size={35} />
        </LocalSlot>
        <LocalSlot>
          <SparkLogo size={36} />
        </LocalSlot>
        <LocalSlot>
          <EdgeLogo size={36} />
        </LocalSlot>
        <LocalSlot>
          <WhatsAppLogo size={36} />
          <NotifyBadge $bg="#f58470" $left={33} $top={9} $w={30}>
            30
          </NotifyBadge>
        </LocalSlot>
        <LocalSlot>
          <FolderLogo size={36} />
        </LocalSlot>
        <LocalSlot>
          <AiBadge>Ai</AiBadge>
        </LocalSlot>
        <LocalSlot>
          <ChromeLogo size={36} />
        </LocalSlot>
        <LocalSlot>
          <StoreLogo size={36} body="#f4f4f4" />
        </LocalSlot>
        <LocalSlot>
          <OutlookLogo size={36} />
        </LocalSlot>
        <LocalSlot>
          <RedEightLogo size={36} />
        </LocalSlot>
        <LocalSlot>
          <XamppLogo size={36} />
        </LocalSlot>
        <LocalSlot>
          <SnipLogo size={36} />
          <LocalDot $wide />
        </LocalSlot>
        <LocalSlot>
          <ChromeLogo size={36} />
          <ChromeBadge>M</ChromeBadge>
          <LocalDot />
        </LocalSlot>
        <LocalSlot>
          <SquareAnyDesk size={36} />
          <LocalDot />
        </LocalSlot>
        <LocalTray>
          <ChevronUp size={24} strokeWidth={2} />
          <TrayGap $w={22} />
          <svg width="28" height="28" viewBox="0 0 28 28">
            <path d="M5 17a6 6 0 0 1 3-11c4 0 6 3 6 6l-2 7H7z" fill="#aaa" />
            <circle cx="17" cy="19" r="8" fill="#e03a3a" />
            <path d="m14 16 6 6m0-6-6 6" stroke="#fff" strokeWidth="1.600" />
          </svg>
          <TrayGap $w={22} />
          <svg width="24" height="19" viewBox="0 0 24 19" fill="none" stroke="#eee" strokeWidth="1.800">
            <rect x="1" y="1" width="22" height="17" rx="2.500" />
            <path d="M1 10h22M12 10v8" />
          </svg>
          <TrayGap $w={22} />
          <Wifi size={26} strokeWidth={2} />
          <TrayGap $w={7} />
          <Volume2 size={26} strokeWidth={1.7} />
          <TrayGap $w={14} />
          <BatteryGlyph />
          <LocalClock>
            04:01
            <br />
            26-06-2025
          </LocalClock>
        </LocalTray>
      </LocalTaskbar>
    </Screen>
  );
};

export default App;
